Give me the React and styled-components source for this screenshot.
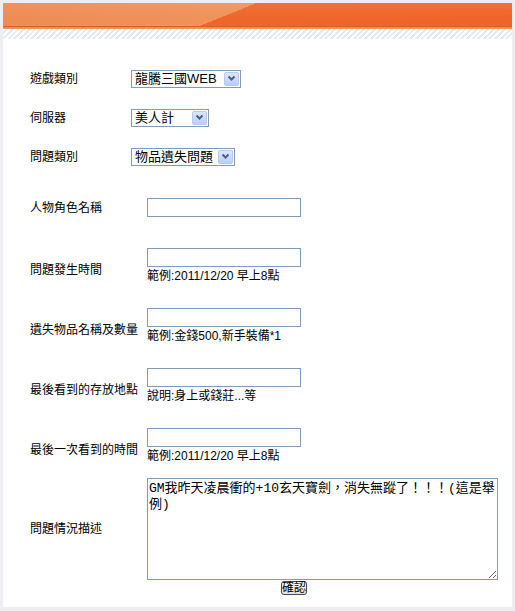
import styled, { createGlobalStyle } from "styled-components";

const GlobalStyle = createGlobalStyle`
  html, body {
    margin: 0;
    padding: 0;
    background: #efedf1;
  }
  body {
    font-family: "Liberation Sans", "Noto Sans CJK TC", sans-serif;
    font-size: 12px;
    color: #000;
  }
`;

const baseFont = `"Liberation Sans", "Noto Sans CJK TC", sans-serif`;

export default function App() {
  return (
    <>
      <GlobalStyle />
      <Page>
        <Panel>
          <Header />
          <Stripe />
          <Form onSubmit={(e) => e.preventDefault()}>
            <SelectSection>
              <Label>遊戲類別</Label>
              <Dropdown width={110} options={["龍騰三國WEB"]} />
              <Label>伺服器</Label>
              <Dropdown width={78} options={["美人計"]} />
              <Label>問題類別</Label>
              <Dropdown width={104} options={["物品遺失問題"]} />
            </SelectSection>

            <Row $mt={22}>
              <Label>人物角色名稱</Label>
              <Field>
                <TextInput />
              </Field>
            </Row>

            <Row $mt={31}>
              <Label $shift>問題發生時間</Label>
              <Field>
                <TextInput />
                <Hint>範例:2011/12/20 早上8點</Hint>
              </Field>
            </Row>

            <Row $mt={25}>
              <Label $shift>遺失物品名稱及數量</Label>
              <Field>
                <TextInput />
                <Hint>範例:金錢500,新手裝備*1</Hint>
              </Field>
            </Row>

            <Row $mt={25}>
              <Label $shift>最後看到的存放地點</Label>
              <Field>
                <TextInput />
                <Hint>說明:身上或錢莊...等</Hint>
              </Field>
            </Row>

            <Row $mt={25}>
              <Label $shift>最後一次看到的時間</Label>
              <Field>
                <TextInput />
                <Hint>範例:2011/12/20 早上8點</Hint>
              </Field>
            </Row>

            <Row $mt={15}>
              <Label>問題情況描述</Label>
              <Field>
                <TextArea defaultValue="GM我昨天凌晨衝的+10玄天寶劍，消失無蹤了！！！(這是舉例)" />
              </Field>
            </Row>

            <Row $mt={1}>
              <span />
              <Field>
                <SubmitButton type="submit">確認</SubmitButton>
              </Field>
            </Row>
          </Form>
        </Panel>
      </Page>
    </>
  );
}

function Dropdown({ width, options }) {
  return (
    <SelectBox $w={width}>
      <NativeSelect>
        {options.map((o) => (
          <option key={o}>{o}</option>
        ))}
      </NativeSelect>
      <ArrowBtn>
        <svg width="9" height="7" viewBox="0 0 9 7">
          <path d="M1.5 1.5 L4.5 4.5 L7.5 1.5" fill="none" stroke="#4d6185" strokeWidth="2" />
        </svg>
      </ArrowBtn>
    </SelectBox>
  );
}

const Page = styled.div`
  padding: 3px 3px 4px;
  width: 509px;
`;

const Panel = styled.div`
  background: #fff;
  height: 604px;
  display: flex;
  flex-direction: column;
`;

const Header = styled.div`
  height: 26px;
  background:
    linear-gradient(to bottom, transparent 23px, #d0642e 23px, #d0642e 24px, #e9824a 24px, #f1a070 26px),
    linear-gradient(to bottom, rgba(255, 255, 255, 0.08), rgba(255, 255, 255, 0) 60%),
    linear-gradient(158deg, #ee8a52 0, #f0925a 95px, #ee6629 95px, #ef6428 100%);
`;

const Stripe = styled.div`
  height: 10px;
  background: repeating-linear-gradient(135deg, #ffffff 0 2px, #e4ebf2 2px 4px);
`;

const Form = styled.form`
  padding: 20px 0 0 27px;
  display: flex;
  flex-direction: column;
`;

const SelectSection = styled.div`
  display: grid;
  grid-template-columns: 101px auto;
  grid-auto-rows: 39px;
  align-items: center;
  justify-items: start;
`;

const Row = styled.div`
  display: grid;
  grid-template-columns: 117px auto;
  align-items: center;
  justify-items: start;
  margin-top: ${(p) => p.$mt || 0}px;
`;

const Label = styled.div`
  font-size: 12px;
  line-height: 14px;
  white-space: nowrap;
  padding-top: ${(p) => (p.$shift ? 8 : 0)}px;
`;

const Field = styled.div`
  display: flex;
  flex-direction: column;
  align-items: flex-start;
`;

const TextInput = styled.input.attrs({ type: "text" })`
  box-sizing: border-box;
  width: 154px;
  height: 19px;
  border: 1px solid #7f9db9;
  padding: 0 2px;
  margin: 0;
  font: 12px ${baseFont};
  outline: none;
`;

const Hint = styled.div`
  margin-top: 2px;
  font-size: 12px;
  line-height: 14px;
  white-space: nowrap;
`;

const SelectBox = styled.div`
  box-sizing: border-box;
  display: inline-flex;
  align-items: center;
  width: ${(p) => p.$w}px;
  height: 18px;
  border: 1px solid #7f9db9;
  background: #fff;
`;

const NativeSelect = styled.select`
  appearance: none;
  border: 0;
  outline: 0;
  background: transparent;
  flex: 1;
  min-width: 0;
  height: 100%;
  padding: 0 0 0 3px;
  margin: 0;
  font: 13px ${baseFont};
  color: #000;
`;

const ArrowBtn = styled.span`
  box-sizing: border-box;
  width: 15px;
  height: 14px;
  margin-right: 1px;
  border: 1px solid #b7c9f0;
  border-radius: 2px;
  background: linear-gradient(#dbe7fe, #b9cef8);
  display: flex;
  align-items: center;
  justify-content: center;
  pointer-events: none;
`;

const TextArea = styled.textarea`
  box-sizing: border-box;
  width: 351px;
  height: 102px;
  border: 1px solid #7f9db9;
  padding: 2px 1px;
  margin: 0;
  font: 13px "Liberation Mono", "Noto Sans CJK TC", monospace;
  line-height: 16px;
  color: #000;
  outline: none;
`;

const SubmitButton = styled.button`
  box-sizing: border-box;
  margin-left: 134px;
  height: 14px;
  padding: 0;
  border: 1px solid #3d4a5c;
  border-radius: 3px;
  background: linear-gradient(#ffffff, #e6e3d6);
  font: 12px ${baseFont};
  line-height: 12px;
  color: #000;
  cursor: pointer;
`;
